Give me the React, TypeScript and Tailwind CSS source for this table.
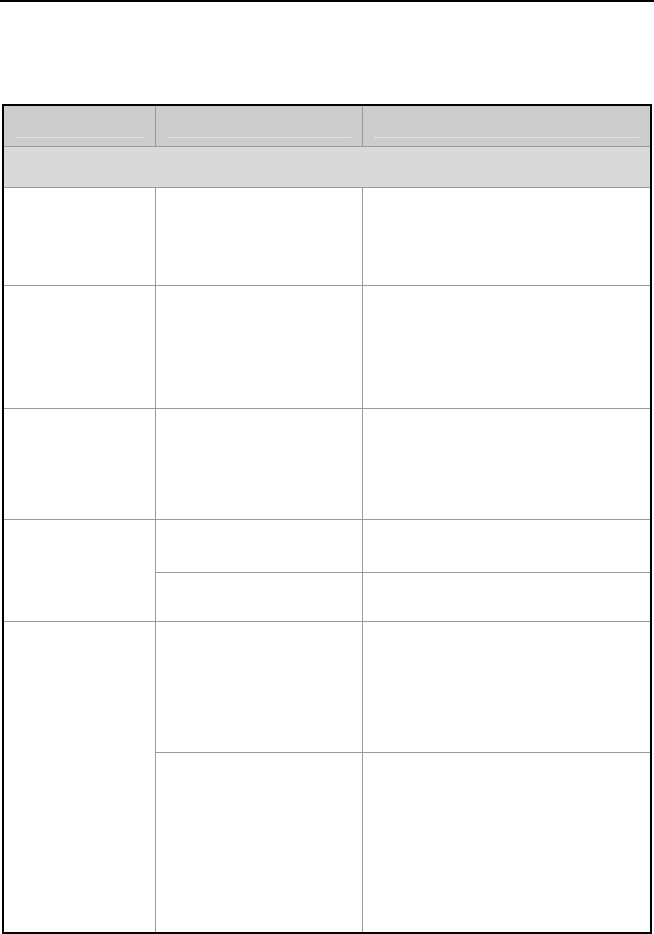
import React from "react";

const HeadCell = ({ last }: { last?: boolean }) => (
  <div className={`relative h-full bg-[#cccccc] ${last ? "" : "border-r border-[#9a9a9a] shadow-[1px_0_0_#f2f2f2]"}`}>
    <div className="absolute left-[11px] right-[11px] top-[31px] h-px bg-[#e4e4e4]" />
  </div>
);

const Row = ({ h }: { h: string }) => (
  <div className={`grid grid-cols-[152px_207px_1fr] border-b border-[#9a9a9a] ${h}`}>
    <div className="border-r border-[#9a9a9a]" />
    <div className="border-r border-[#9a9a9a]" />
    <div />
  </div>
);

export default function App() {
  return (
    <div className="w-[654px] h-[934px] bg-white overflow-hidden font-['Liberation_Sans',sans-serif]">
      <div className="h-[2px] bg-black" />
      <div className="ml-[2px] mt-[102px] w-[650px] border-2 border-black flex flex-col">
        <div className="grid grid-cols-[152px_207px_1fr] h-[41px] border-b border-[#9a9a9a]">
          <HeadCell />
          <HeadCell />
          <HeadCell last />
        </div>
        <div className="h-[41px] bg-[#d9d9d9] border-b border-[#9a9a9a]" />
        <Row h="h-[98px]" />
        <Row h="h-[123px]" />
        <Row h="h-[111px]" />
        <div className="grid grid-cols-[152px_207px_1fr] grid-rows-[53px_49px] h-[102px] border-b border-[#9a9a9a]">
          <div className="row-span-2 border-r border-[#9a9a9a]" />
          <div className="border-r border-b border-[#9a9a9a]" />
          <div className="border-b border-[#9a9a9a]" />
          <div className="border-r border-[#9a9a9a]" />
          <div />
        </div>
        <div className="grid grid-cols-[152px_207px_1fr] grid-rows-[131px_179px] h-[310px]">
          <div className="row-span-2 border-r border-[#9a9a9a]" />
          <div className="border-r border-b border-[#9a9a9a]" />
          <div className="border-b border-[#9a9a9a]" />
          <div className="border-r border-[#9a9a9a]" />
          <div />
        </div>
      </div>
    </div>
  );
}
